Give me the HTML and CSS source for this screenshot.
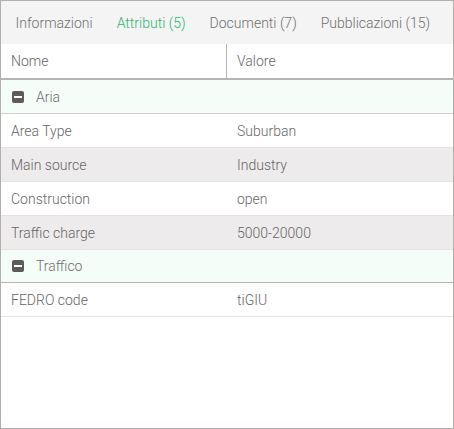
FILE: index.html
```html
<!DOCTYPE html>
<html>
<head>
<meta charset="utf-8">
<link rel="stylesheet" href="styles.css">
</head>
<body>
<div class="panel">
  <div class="tabs">
    <div class="tab">Informazioni</div>
    <div class="tab active">Attributi (5)</div>
    <div class="tab">Documenti (7)</div>
    <div class="tab">Pubblicazioni (15)</div>
  </div>
  <div class="grid">
    <div class="row head">
      <div class="cell name">Nome</div>
      <div class="cell value">Valore</div>
    </div>
    <div class="row group">
      <span class="icon"><span class="bar"></span></span>
      <span class="gtitle">Aria</span>
    </div>
    <div class="row">
      <div class="cell name">Area Type</div>
      <div class="cell value">Suburban</div>
    </div>
    <div class="row alt">
      <div class="cell name">Main source</div>
      <div class="cell value">Industry</div>
    </div>
    <div class="row">
      <div class="cell name">Construction</div>
      <div class="cell value">open</div>
    </div>
    <div class="row alt">
      <div class="cell name">Traffic charge</div>
      <div class="cell value">5000-20000</div>
    </div>
    <div class="row group last">
      <span class="icon"><span class="bar"></span></span>
      <span class="gtitle">Traffico</span>
    </div>
    <div class="row">
      <div class="cell name">FEDRO code</div>
      <div class="cell value">tiGIU</div>
    </div>
  </div>
</div>
</body>
</html>
```
FILE: styles.css
```css
html, body {
  margin: 0;
  padding: 0;
  background: #fff;
}
body {
  font-family: Roboto, "Liberation Sans", sans-serif;
  font-size: 14px;
  font-weight: 300;
  color: #666;
}
.panel {
  box-sizing: border-box;
  width: 454px;
  height: 429px;
  border: 1px solid #b4afaf;
  background: #fff;
  display: flex;
  flex-direction: column;
}
.tabs {
  display: flex;
  flex: none;
  height: 43px;
  align-items: center;
  background: #f4f4f4;
  padding-left: 2px;
}
.tab {
  padding: 0 12px;
  color: #707070;
  white-space: nowrap;
}
.tab:first-child {
  padding-left: 12.5px;
}
.tab.active {
  color: #1eb771;
}
.row {
  display: flex;
  height: 33px;
  align-items: center;
  border-bottom: 1px solid #e3e3e3;
}
.row.alt {
  background: #eeebec;
}
.row.head {
  height: 34px;
  border-bottom: 2px solid #b7b3b3;
}
.row.head .name {
  border-right: 1px solid #b7b3b3;
  height: 34px;
  display: flex;
  align-items: center;
}
.cell {
  padding-left: 10px;
  box-sizing: border-box;
}
.cell.name {
  flex: 0 0 226px;
  width: 226px;
}
.cell.value {
  flex: 1 1 auto;
}
.row.group {
  background: #f4fdf7;
  border-bottom: 1px solid #cfcfcf;
  padding-left: 11px;
}
.row.group.last {
  height: 32px;
  border-bottom: 1px solid #b7b3b3;
}
.icon {
  flex: none;
  width: 12px;
  height: 12px;
  background: #5d5b5b;
  border-radius: 2px;
  display: flex;
  align-items: center;
  justify-content: center;
}
.bar {
  width: 8px;
  height: 2px;
  background: #fff;
}
.gtitle {
  margin-left: 12px;
  color: #707070;
}
```
